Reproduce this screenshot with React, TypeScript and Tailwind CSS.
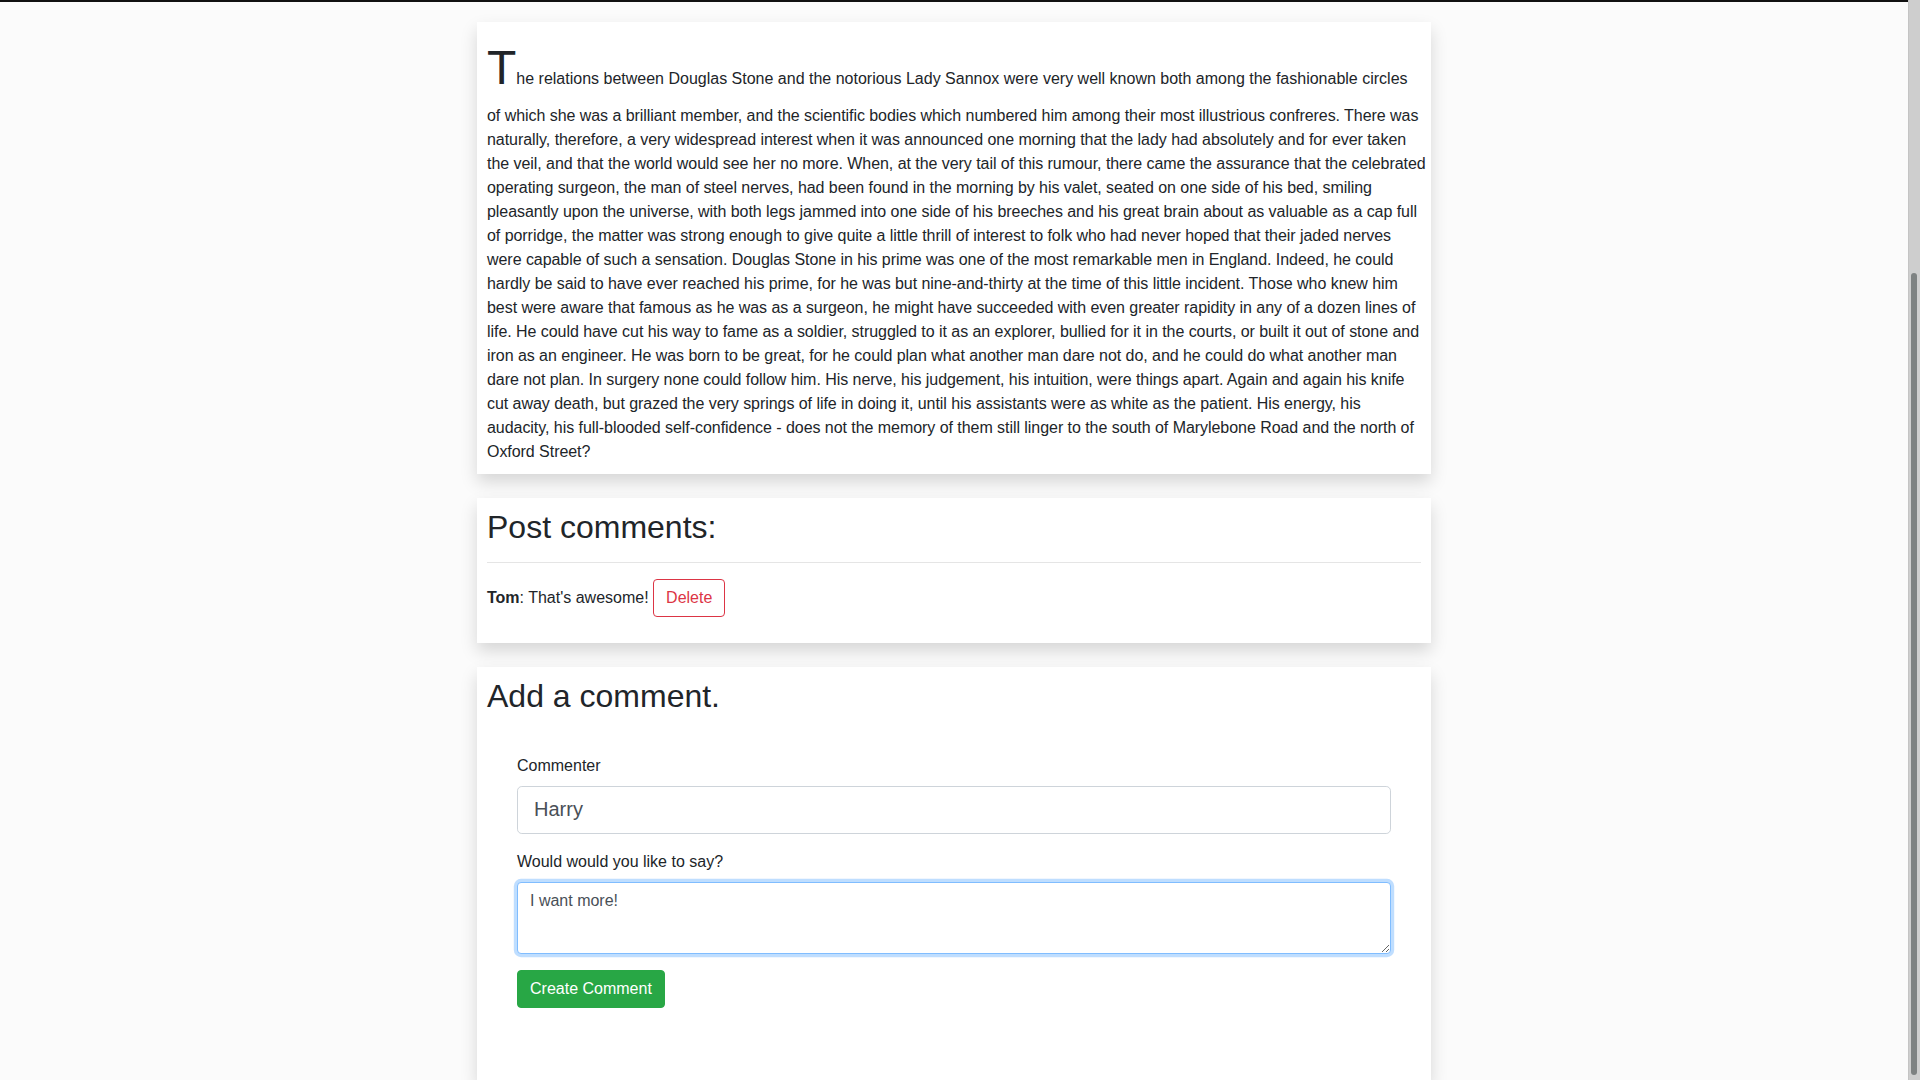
import React from "react";

const FIRST =
  "he relations between Douglas Stone and the notorious Lady Sannox were very well known both among the fashionable circles";
const LINES = [
  "of which she was a brilliant member, and the scientific bodies which numbered him among their most illustrious confreres. There was",
  "naturally, therefore, a very widespread interest when it was announced one morning that the lady had absolutely and for ever taken",
  "the veil, and that the world would see her no more. When, at the very tail of this rumour, there came the assurance that the celebrated",
  "operating surgeon, the man of steel nerves, had been found in the morning by his valet, seated on one side of his bed, smiling",
  "pleasantly upon the universe, with both legs jammed into one side of his breeches and his great brain about as valuable as a cap full",
  "of porridge, the matter was strong enough to give quite a little thrill of interest to folk who had never hoped that their jaded nerves",
  "were capable of such a sensation. Douglas Stone in his prime was one of the most remarkable men in England. Indeed, he could",
  "hardly be said to have ever reached his prime, for he was but nine-and-thirty at the time of this little incident. Those who knew him",
  "best were aware that famous as he was as a surgeon, he might have succeeded with even greater rapidity in any of a dozen lines of",
  "life. He could have cut his way to fame as a soldier, struggled to it as an explorer, bullied for it in the courts, or built it out of stone and",
  "iron as an engineer. He was born to be great, for he could plan what another man dare not do, and he could do what another man",
  "dare not plan. In surgery none could follow him. His nerve, his judgement, his intuition, were things apart. Again and again his knife",
  "cut away death, but grazed the very springs of life in doing it, until his assistants were as white as the patient. His energy, his",
  "audacity, his full-blooded self-confidence - does not the memory of them still linger to the south of Marylebone Road and the north of",
  "Oxford Street?",
];

export default function App() {
  return (
    <div className="flex h-screen w-full overflow-hidden font-['Liberation_Sans',Arial,sans-serif] text-[16px] leading-6 text-[#212529]">
      <div className="flex min-w-0 flex-1 flex-col bg-[#fbfbfb]">
        <div className="h-[2px] shrink-0 bg-[#111]" />
        <div className="mx-auto mt-[20px] flex w-[954px] flex-1 flex-col gap-6">
          {/* Story card */}
          <div className="bg-white p-[10px] shadow-[0_8px_16px_rgba(0,0,0,0.15)]">
            <p className="m-0 whitespace-nowrap">
              <span className="text-[48px] leading-[1.5]">T</span>
              {FIRST}
              <span className="tracking-[-0.05px]">
                {LINES.map((line, i) => (
                  <React.Fragment key={i}>
                    <br />
                    {line}
                  </React.Fragment>
                ))}
              </span>
            </p>
          </div>

          {/* Comments card */}
          <div className="bg-white px-[10px] pt-[10px] pb-[10px] shadow-[0_8px_16px_rgba(0,0,0,0.15)]">
            <h2 className="text-[32px] font-normal leading-[1.2]">Post comments:</h2>
            <hr className="mt-4 mb-4 border-0 border-t border-[rgba(0,0,0,0.1)]" />
            <p className="mb-4">
              <strong className="font-bold">Tom</strong>: That's awesome!{" "}
              <button
                type="button"
                className="inline-block rounded-[4px] border border-[#dc3545] bg-transparent px-3 py-[6px] align-baseline text-[16px] leading-6 text-[#dc3545]"
              >
                Delete
              </button>
            </p>
          </div>

          {/* Add comment card */}
          <div className="flex-1 bg-white px-[10px] pt-[10px] shadow-[0_8px_16px_rgba(0,0,0,0.15)]">
            <h2 className="text-[32px] font-normal leading-[1.2]">Add a comment.</h2>
            <form className="mt-[38px] px-[30px]" onSubmit={(e) => e.preventDefault()}>
              <div className="mb-4">
                <label className="mb-2 block">Commenter</label>
                <input
                  type="text"
                  readOnly
                  defaultValue="Harry"
                  className="block h-[48px] w-full rounded-[4.8px] border border-[#ced4da] bg-white px-4 py-2 text-[20px] leading-[1.5] text-[#495057] outline-none"
                />
              </div>
              <div className="mb-4">
                <label className="mb-2 block">Would would you like to say?</label>
                <textarea
                  readOnly
                  defaultValue="I want more!"
                  className="block h-[72px] w-full rounded-[4px] border border-[#80bdff] bg-white px-3 py-[6px] text-[16px] leading-6 text-[#495057] shadow-[0_0_0_3.2px_rgba(0,123,255,0.25)] outline-none"
                />
              </div>
              <button
                type="submit"
                className="inline-block rounded-[4px] border border-[#28a745] bg-[#28a745] px-3 py-[6px] text-[16px] leading-6 text-white"
              >
                Create Comment
              </button>
            </form>
          </div>
        </div>
      </div>

      {/* Scrollbar */}
      <div className="flex w-[12px] shrink-0 flex-col border-l border-[#c4c4c4] bg-[#cecece] pt-[273px] pb-[5px] pl-[2px] pr-[3px]">
        <div className="flex-1 rounded-full bg-[#7e8282]" />
      </div>
    </div>
  );
}
